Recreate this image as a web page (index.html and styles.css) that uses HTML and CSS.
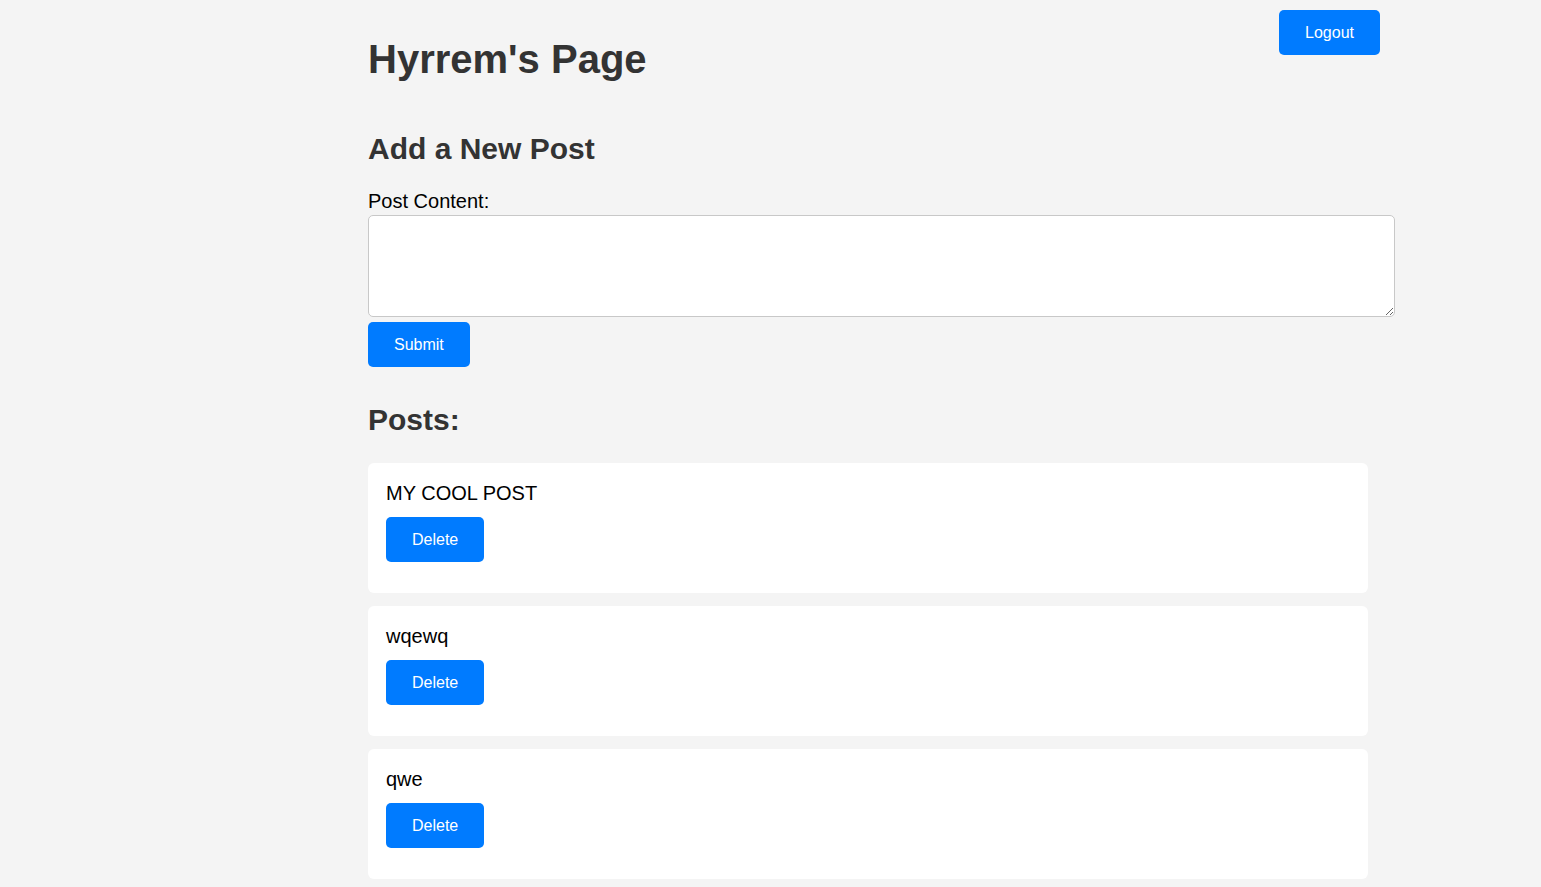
FILE: index.html
```html
<!DOCTYPE html>
<html lang="en">
<head>
<meta charset="utf-8">
<title>Hyrrem's Page</title>
<link rel="stylesheet" href="styles.css">
</head>
<body>
<div class="page">
  <button class="btn logout">Logout</button>
  <h1 class="title">Hyrrem's Page</h1>
  <h2 class="section-title">Add a New Post</h2>
  <form class="post-form">
    <label class="label" for="content">Post Content:</label>
    <textarea id="content" class="content-input"></textarea>
    <button type="button" class="btn submit">Submit</button>
  </form>
  <h2 class="section-title posts-title">Posts:</h2>
  <div class="posts">
    <div class="post">
      <p class="post-text">MY COOL POST</p>
      <button class="btn">Delete</button>
    </div>
    <div class="post">
      <p class="post-text">wqewq</p>
      <button class="btn">Delete</button>
    </div>
    <div class="post">
      <p class="post-text">qwe</p>
      <button class="btn">Delete</button>
    </div>
  </div>
</div>
</body>
</html>
```

FILE: styles.css
```css
html, body {
  margin: 0;
  padding: 0;
  background: #f4f4f4;
}

body {
  font-family: "Liberation Sans", Arial, sans-serif;
  font-size: 20px;
  color: #000;
}

.page {
  position: relative;
  width: 1000px;
  margin-left: 368px;
  padding-top: 36px;
}

.title {
  margin: 0 0 50px;
  font-size: 40px;
  line-height: 46px;
  font-weight: bold;
  color: #333;
}

.section-title {
  margin: 0;
  font-size: 30px;
  line-height: 34px;
  font-weight: bold;
  color: #333;
}

.post-form {
  display: flex;
  flex-direction: column;
  align-items: flex-start;
  margin-top: 24px;
}

.label {
  display: block;
  line-height: 23px;
}

.content-input {
  box-sizing: border-box;
  display: block;
  width: 1027px;
  height: 102px;
  margin-top: 2px;
  border: 1px solid #c8c8c8;
  border-radius: 5px;
  background: #fff;
  padding: 10px;
  font-family: "Liberation Sans", Arial, sans-serif;
  font-size: 16px;
}

.btn {
  display: inline-block;
  height: 45px;
  padding: 0 26px;
  border: none;
  border-radius: 5px;
  background: #007bff;
  color: #fff;
  font-family: "Liberation Sans", Arial, sans-serif;
  font-size: 16px;
  line-height: 45px;
  cursor: pointer;
}

.submit {
  margin-top: 5px;
}

.logout {
  position: absolute;
  top: 10px;
  right: -12px;
}

.posts-title {
  margin-top: 36px;
}

.posts {
  display: flex;
  flex-direction: column;
  gap: 13px;
  margin-top: 26px;
}

.post {
  box-sizing: border-box;
  height: 130px;
  padding: 19px 18px 18px;
  background: #fff;
  border-radius: 6px;
}

.post-text {
  margin: 0 0 12px;
  line-height: 23px;
}
```
